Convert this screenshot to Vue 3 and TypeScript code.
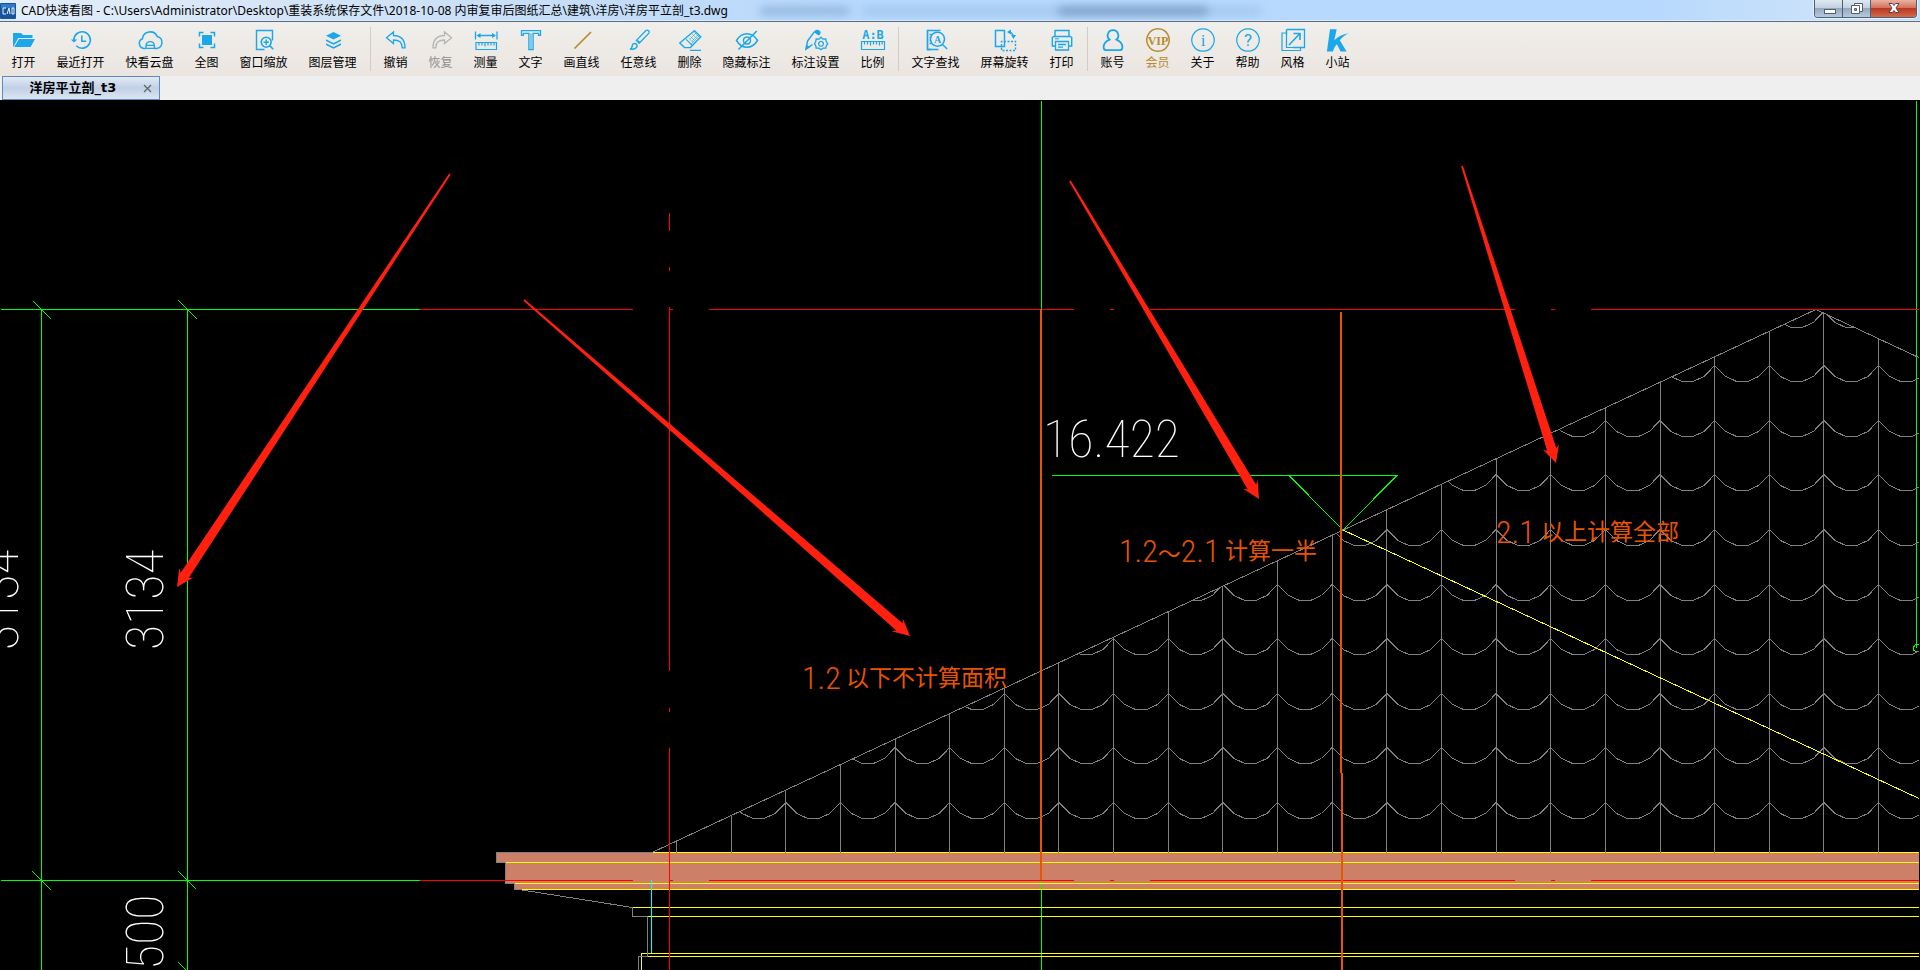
<script setup lang="ts">
interface Shape { d: string; fill?: boolean; w?: number; dash?: string }
interface Glyph { t: string; x: number; y: number; size: number; cls: string }
interface Tool { label: string; tone?: 'gold' | 'off'; shapes: Shape[]; glyphs?: Glyph[] }

const ring = 'M12 0.8a11.2 11.2 0 1 0 0.01 0z'

const groups: Tool[][] = [
  [
    { label: '打开', shapes: [
      { d: 'M1 5h8l2 2h9.5v3H6.2L1.6 18.5H1z', fill: true },
      { d: 'M7 11h16l-4.4 8H2.2z', fill: true },
    ] },
    { label: '最近打开', shapes: [
      { d: 'M4.9 12a8.2 8.2 0 1 1 2.4 5.8', w: 1.6 },
      { d: 'M1.8 11.4h6.4L5 14.6z', fill: true },
      { d: 'M12.8 7.6v5.6h4.4', w: 1.5 },
    ] },
    { label: '快看云盘', shapes: [
      { d: 'M7.5 20.4H6a5 5 0 0 1-1.6-9.6A7.8 7.8 0 0 1 19.3 8.6a6 6 0 0 1-.7 11.8h-2', w: 1.5 },
      { d: 'M8 20.4v-2.6a4.2 4.2 0 0 1 8.4 0v2.6zM8 17.4h8.4', w: 1.4 },
    ] },
    { label: '全图', shapes: [
      { d: 'M7 7h10v10H7z', fill: true },
      { d: 'M4.5 8.5V4.5h4M15.5 4.5h4v4M19.5 15.5v4h-4M8.5 19.5h-4v-4', w: 1.5 },
    ] },
    { label: '窗口缩放', shapes: [
      { d: 'M12.5 21.5H4.5v-19h16v10', w: 1.4 },
      { d: 'M14.2 9.2a5 5 0 1 0 .01 0zM17.8 17.6l3.4 3.6', w: 1.6 },
      { d: 'M11.5 14.2h5.4M14.2 11.5v5.4', w: 1.4 },
    ] },
    { label: '图层管理', shapes: [
      { d: 'M12.5 4l7.5 3.8-7.5 3.8L5 7.8z', fill: true },
      { d: 'M5 11.2l7.5 3.7 7.5-3.7v1.9l-7.5 3.7L5 13.1zM5 15.3l7.5 3.7 7.5-3.7v1.7l-7.5 3.7L5 17z', fill: true },
    ] },
  ],
  [
    { label: '撤销', shapes: [
      { d: 'M2.5 9.8L9.5 4v3.5C16 7.6 21 10 21 19.8h-2.8c0-5.6-3-7.8-8.7-7.8v3.6z', w: 1.3 },
    ] },
    { label: '恢复', tone: 'off', shapes: [
      { d: 'M22.5 9.8L15.5 4v3.5C9 7.6 4 10 4 19.8h2.8c0-5.6 3-7.8 8.7-7.8v3.6z', w: 1.3 },
    ] },
    { label: '测量', shapes: [
      { d: 'M1.5 3.5v8M23 3.5v8M4 7.5h16.5', w: 1.3 },
      { d: 'M2.5 7.5L6.5 5v5zM22 7.5L18 5v5z', fill: true },
      { d: 'M2 14.5h20.5v7H2zM5 15v2.5M8 15v2.5M11 15v3.5M14 15v2.5M17 15v2.5M20 15v2.5', w: 1.2 },
    ] },
    { label: '文字', shapes: [
      { d: 'M2.5 2.7h19v4.6h-1.9V5.4h-5.5v16.2h-4.2V5.4H4.4v1.9H2.5z', w: 1.3 },
      { d: 'M12 5.4v16', w: 1 },
    ] },
    { label: '画直线', tone: 'gold', shapes: [{ d: 'M4.5 20.5L21 4', w: 1.7 }] },
    { label: '任意线', shapes: [
      { d: 'M9.4 12.4L19 2.6c1.8-1.4 4.2.8 2.9 2.6L12.4 15z', w: 1.3 },
      { d: 'M3 21c2.3-.5 2-1.8 2.3-3.6.4-2.4 4-2.3 4.7-.3.7 2.6-2.3 4.6-7 3.9z', w: 1.5 },
      { d: 'M10.4 12.8l2.1 2', w: 2 },
    ] },
    { label: '删除', shapes: [
      { d: 'M16.5 2.8l6.3 6L12.4 19.6H6.6L1.8 15z', w: 1.4 },
      { d: 'M8.2 11.4l6 6M12 22.3h11', w: 1.2 },
      { d: 'M16.5 4.5l4.6 4.4M14.5 6.5l4.6 4.4M12.5 8.5l4.6 4.4M10.8 10.4l4.6 4.4M12 11l6-6M14 13l6-6M13 16l8-8', w: 0.6 },
    ] },
    { label: '隐藏标注', shapes: [
      { d: 'M1.5 12.5c5.5-9 15.5-9 21 0-5.5 9-15.5 9-21 0z', w: 1.5 },
      { d: 'M12 8.9a3.6 3.6 0 1 0 .01 0z', w: 1.5 },
      { d: 'M3.5 21.5L21.8 3', w: 1.5 },
    ] },
    { label: '标注设置', shapes: [
      { d: 'M10.5 3.6L3.5 13 2 21l6.5-4.5M10.5 3.6l4.5 3.2', w: 1.5 },
      { d: 'M1.3 22l1-5.5 4 2.7zM11 2.5c1.5-2 6-.3 5.7 2.7l-1.5 2-4.6-3.5z', fill: true },
      { d: 'M17 9.2l2 2 2.8-.2.5 2.8 1.5 1.9-1.5 1.9-.5 2.5-2.8.1-2 1.5-2-1.5-2.8-.1-.5-2.5-1.2-1.9 1.2-1.9.5-2.8 2.8.2z', w: 1.3 },
      { d: 'M17 13.4a2.4 2.4 0 1 0 .01 0z', w: 1.3 },
    ] },
    { label: '比例', shapes: [
      { d: 'M0.5 13.5h23v8h-23zM3.5 14v2.5M6.5 14v2.5M9.5 14v3.5M12.5 14v2.5M15.5 14v2.5M18.5 14v3.5M21.2 14v2.5', w: 1.2 },
    ], glyphs: [{ t: 'A:B', x: 12, y: 10.5, size: 12, cls: 'mono' }] },
  ],
  [
    { label: '文字查找', shapes: [
      { d: 'M7 21.5H3.5v-19h13', w: 1.5 },
      { d: 'M3.5 2.5v19h11M5.5 6.5h2.5M5.5 9.5h1.5M5.5 12.5h1.5M5.5 15.5h2.5', w: 1.3 },
      { d: 'M13.5 4.2a7 7 0 1 0 .01 0zM18.5 16.5l4.7 4.5', w: 1.4 },
    ], glyphs: [{ t: 'A', x: 13.5, y: 15, size: 10, cls: 'serif' }] },
    { label: '屏幕旋转', shapes: [
      { d: 'M2.5 2.5h9v16h-9z', w: 1.5 },
      { d: 'M8.5 21.5v-8h14v9h-14z', w: 1.4, dash: '2 1.5' },
      { d: 'M15 4c3 0 5 2 5.5 5', w: 1.4 },
      { d: 'M14 4l4-2.5v5zM20.5 11l-2.5-4h5z', fill: true },
    ] },
    { label: '打印', shapes: [
      { d: 'M5 8.5V2.5h14v6M5 18H2.3V9.5L4 8.5h16l1.7 1V18H19', w: 1.4 },
      { d: 'M5.5 13.5h13v8.5h-13zM8 16.5h8M8 19.2h5', w: 1.3 },
      { d: 'M5 10.8h4', w: 1 },
    ] },
  ],
  [
    { label: '账号', shapes: [
      { d: 'M12 2.2a5.3 5.3 0 0 1 3.4 9.4c3.4 1.4 6 4.6 6 7.8 0 2-1.2 2.7-3 2.7H5.6c-1.8 0-3-.7-3-2.7 0-3.2 2.6-6.4 6-7.8A5.3 5.3 0 0 1 12 2.2z', w: 1.8 },
    ] },
    { label: '会员', tone: 'gold', shapes: [{ d: ring, w: 1.5 }], glyphs: [{ t: 'VIP', x: 12, y: 16.5, size: 12, cls: 'serif' }] },
    { label: '关于', shapes: [{ d: ring, w: 1.2 }], glyphs: [{ t: 'i', x: 12, y: 17.5, size: 17, cls: 'serif thin' }] },
    { label: '帮助', shapes: [{ d: ring, w: 1.2 }], glyphs: [{ t: '?', x: 12, y: 18, size: 17, cls: 'sans' }] },
    { label: '风格', shapes: [
      { d: 'M6 1.5h17.5v18H12M5.5 7V1.5M18.5 1.5h5v18h-5', w: 1.3 },
      { d: 'M5.5 1.5v3.5H1v17.5h18.5v-3H5.5V4', w: 1.2 },
      { d: 'M8 17L18.5 6M12.5 5.5h6.5v6.5', w: 1.6 },
    ] },
    { label: '小站', shapes: [
      { d: 'M4 1.3h6.7L8.3 12.2C12 8.5 16.5 6 22.8 5.2c-3.6 1.5-6.6 4-9 7l6.8 11.2h-6l-3.7-7.2c-1.8 2-3.2 4.5-4 7.2H.9z', fill: true },
    ] },
  ],
]

const widthClass = (label: string) => `chars-${label.length}`

const fileName = '洋房平立剖_t3'
const title = 'CAD快速看图 - C:\\Users\\Administrator\\Desktop\\重装系统保存文件\\2018-10-08 内审复审后图纸汇总\\建筑\\洋房\\洋房平立剖_t3.dwg'

/* Roof tiles: one wavy row repeated on a regular pitch */
const pitch = 54.64
const columns = Array.from({ length: 23 }, (_, i) => Math.round(676 + i * pitch) + 0.5)
const tileRows = Array.from({ length: 10 }, (_, r) => {
  const y = Math.round(802 - r * 54.6)
  let d = ''
  for (let i = -1; i < 23; i++) {
    const x = 676.5 + i * pitch
    const pts = [[0, 0], [11, 11], [22, 16], [33, 16], [44, 11], [pitch, 0]]
    d += pts.map(([px, py], k) => `${k ? 'L' : 'M'}${(x + px).toFixed(1)} ${y + py + 0.5}`).join('')
  }
  return d
})
const roofTop = (x: number) => (x <= 1816 ? 852 - (x - 653) * 0.4665 : 309.5 + (x - 1816) * 0.467)

const lines = (y: number, segs: number[][]) => segs.map(([a, b]) => `M${a} ${y}.5H${b}`).join('')
const axisSegs = [[420, 633], [669, 673], [709, 1074], [1110, 1114], [1150, 1515], [1551, 1555], [1591, 1919]]
const redAxes = lines(309, axisSegs) + lines(880, axisSegs) + 'M669.5 213V231M669.5 267V271M669.5 307V671M669.5 708V712M669.5 748V970'

/* Tapered arrow from a thin tail to a pointed head */
function arrow(x1: number, y1: number, x2: number, y2: number): string {
  const len = Math.hypot(x1 - x2, y1 - y2)
  const ux = (x1 - x2) / len
  const uy = (y1 - y2) / len
  const at = (along: number, side: number) =>
    `${(x2 + ux * along - uy * side).toFixed(1)},${(y2 + uy * along + ux * side).toFixed(1)}`
  return [at(0, 0), at(17, 8.5), at(14, 4.8), at(len, 0.9), at(len, -0.9), at(14, -4.8), at(17, -8.5)].join(' ')
}
const arrows = [
  arrow(450, 174, 177, 587),
  arrow(524, 300, 910, 636),
  arrow(1070, 181, 1259, 499),
  arrow(1462, 166, 1556, 463),
]
</script>

<template>
  <div class="app">
    <header class="titlebar">
      <span class="ghost" aria-hidden="true"><i class="g1"></i><i class="g2"></i><i class="g3"></i></span>
      <svg class="logo" viewBox="0 0 16 16" aria-hidden="true">
        <rect width="16" height="16" rx="1" fill="#17549c" />
        <path d="M1 1h14v4H1z" fill="#2f7cc6" />
        <path d="M6 5H3v6h3M7 11l2-6 1 6M12 5h2v6h-2z" fill="none" stroke="#e8f4ff" stroke-width="1" />
      </svg>
      <h1>{{ title }}</h1>
      <div class="window-buttons">
        <button type="button" aria-label="最小化">
          <svg viewBox="0 0 28 20"><rect x="9.5" y="9.5" width="11" height="4" fill="#fff" stroke="#53616f" /></svg>
        </button>
        <button type="button" aria-label="还原">
          <svg viewBox="0 0 28 20"><path d="M11.5 3.5h8v8h-8z" fill="#fff" stroke="#53616f" /><path d="M8.5 5.500h8v8h-8z" fill="#fff" stroke="#53616f" /><path d="M11.500 8.500h2v2h-2z" fill="#aac" stroke="#53616f" /></svg>
        </button>
        <button type="button" class="close" aria-label="关闭">
          <svg viewBox="0 0 28 20"><path d="M9 3.500h3.500L14 5.500l1.500-2H19L16 8l3 4.500h-3.500l-1.500-2-1.500 2H9L12 8z" fill="#fff" stroke="#5d4250" stroke-width="1" /></svg>
        </button>
      </div>
    </header>

    <nav class="toolbar">
      <template v-for="(group, gi) in groups" :key="gi">
        <span v-if="gi > 0" class="sep"></span>
        <button
          v-for="tool in group"
          :key="tool.label"
          type="button"
          class="tool"
          :class="[widthClass(tool.label), tool.tone, { vip: tool.label === '会员' }]"
          :disabled="tool.tone === 'off'"
        >
          <svg viewBox="0 0 24 24" aria-hidden="true">
            <path
              v-for="(s, i) in tool.shapes"
              :key="i"
              :d="s.d"
              :class="s.fill ? 'solid' : 'line'"
              :stroke-width="s.w"
              :stroke-dasharray="s.dash"
            />
            <text v-for="g in tool.glyphs" :key="g.t" :x="g.x" :y="g.y" :font-size="g.size" :class="g.cls" text-anchor="middle">{{ g.t }}</text>
          </svg>
          <span>{{ tool.label }}</span>
        </button>
      </template>
    </nav>

    <div class="tabs">
      <div class="tab">
        <button type="button" class="tab-name">{{ fileName }}</button>
        <button type="button" class="tab-close" aria-label="关闭标签">
          <svg viewBox="0 0 9 9"><path d="M1 1l7 7M8 1L1 8" /></svg>
        </button>
      </div>
    </div>

    <main class="drawing">
      <svg viewBox="0 100 1920 870" preserveAspectRatio="xMinYMin slice">
        <defs>
          <clipPath id="roof"><path d="M653 852L1816 309.5L1919 357.6V852z" /></clipPath>
        </defs>

        <g class="cad">
          <path d="M496 852H1919V889H514V883H505V862H496z" class="slab" />
          <path class="green" d="M1 309.5H420M1 880.5H420M41.5 309V970M187.5 309V970M33 301L51 319M178 300L197 319M32 871L51 890M178 871L196 889M178 962L187 971M1041.5 101V970M1916.5 101V648" />
          <path class="green" d="M1919 644.5H1915.5L1913.5 647V650L1915.5 651.5H1919" />
          <path class="yellow" d="M653 852.5H1919M506 862.5H1919M515 883.5H1919M519 889.5H1919M633 907.5H1919M648 916.5H1919M641.5 970V953.5H1919M648 956.5H1919" />
          <path class="cyan" d="M651.5 880V953" />
          <path class="grey" d="M653 852.5H496.5V862.5H505.5V883.5H514.5V889.5H519L632.5 907.5V916.5H647.5V956.5H638.5V970" />
          <path class="grey" d="M653 852L1816 309.5L1919 357.6" />
          <path v-for="x in columns" :key="x" class="grey" :d="`M${x} ${roofTop(x).toFixed(0)}V853`" />
          <g clip-path="url(#roof)">
            <path v-for="(d, i) in tileRows" :key="i" class="grey" :d="d" />
          </g>
          <path class="yellow" d="M1343 530L1919 798.5" />
          <path class="red" :d="redAxes" />
          <path class="green" d="M1052 475.5H1397L1343 530L1289 475.5" />
          <path class="orange" d="M1041 309V880M1341 312V773M1342 773V970" />
        </g>

        <g class="dims">
          <text x="1043" y="457">16.422</text>
          <text transform="translate(163 650) rotate(-90)">3134</text>
          <text transform="translate(18 650) rotate(-90)">3134</text>
          <text transform="translate(163 970) rotate(-90)">500</text>
        </g>

        <g class="notes">
          <text x="802" y="689">1.2</text><text x="846" y="686" class="han">以下不计算面积</text>
          <text x="1119" y="562">1.2<tspan class="han">～</tspan>2.1</text><text x="1225" y="559" class="han">计算一半</text>
          <text x="1496" y="543">2.1</text><text x="1541" y="540" class="han">以上计算全部</text>
        </g>

        <polygon v-for="(p, i) in arrows" :key="i" :points="p" class="arrow" />
      </svg>
    </main>
  </div>
</template>

<style>
html,
body {
  background: #000;
}
</style>

<style scoped>
.app {
  display: flex;
  flex-direction: column;
  min-height: 100vh;
  background: #000;
  font-family: "Noto Sans", "Noto Sans CJK SC", sans-serif;
  font-size: 12px;
  color: #000;
}
button {
  margin: 0;
  padding: 0;
  border: 0;
  background: none;
  font: inherit;
  color: inherit;
}
.titlebar {
  position: relative;
  display: flex;
  align-items: flex-start;
  height: 22px;
  box-sizing: border-box;
  border-bottom: 1px solid #5b6c85;
  box-shadow: inset 0 -1px 0 #dcebfb;
  background: linear-gradient(90deg, #e4eefa 0%, #d5e5f7 14%, #c3dcf8 32%, #b7d9fd 45%, #b7d9fd 86%, #c9e1fa 94%, #c4def9 100%);
  overflow: hidden;
}
.logo {
  width: 16px;
  height: 16px;
  margin-top: 3px;
}
h1 {
  position: relative;
  margin: 0 0 0 5px;
  font-size: 12px;
  line-height: 22px;
  font-weight: 400;
  white-space: nowrap;
}
.ghost {
  position: absolute;
  inset: 0;
}
.ghost i {
  position: absolute;
  top: 7px;
  height: 8px;
  border-radius: 4px;
  filter: blur(4px);
}
.g1 {
  left: 760px;
  width: 90px;
  background: #8fb4dc;
}
.g2 {
  left: 862px;
  width: 400px;
  background: #a2c6ee;
}
.g3 {
  left: 1058px;
  width: 150px;
  background: #7c9fca;
}
.window-buttons {
  display: flex;
  margin-left: auto;
  margin-right: 3px;
  height: 18px;
  box-sizing: border-box;
  border: 1px solid #4f5f73;
  border-top: 0;
  border-radius: 0 0 4px 4px;
  overflow: hidden;
  box-shadow: 0 0 0 1px #e6f1fc;
}
.window-buttons button {
  width: 28px;
  background: linear-gradient(#dfe9f3 0, #c3d1e0 45%, #94a8bf 50%, #b7c9dc 100%);
  border-right: 1px solid #4f5f73;
}
.window-buttons .close {
  width: 45px;
  border-right: 0;
  background: linear-gradient(#e9b3a4 0, #d5725c 45%, #b83a22 50%, #d4694b 100%);
}
.window-buttons svg {
  display: block;
  width: 28px;
  height: 20px;
  margin: 0 auto;
}
.toolbar {
  display: flex;
  height: 54px;
  padding-left: 1px;
  background: linear-gradient(#f0efeb, #ebe5e1);
  overflow: hidden;
}
.tool {
  display: flex;
  flex: none;
  flex-direction: column;
  align-items: center;
  padding-top: 6px;
}
.chars-2 {
  width: 45px;
}
.chars-3 {
  width: 57px;
}
.chars-4 {
  width: 69px;
}
.tool svg {
  width: 24px;
  height: 24px;
  overflow: visible;
  color: #1aa7ec;
}
.tool span {
  margin-top: 3px;
  line-height: 16px;
  white-space: nowrap;
}
.tool.gold svg,
.vip {
  color: #b98a2c;
}
.tool.off {
  color: #8f8f8f;
}
.tool.off svg {
  color: #b5b5b5;
}
.solid,
.tool text {
  fill: currentColor;
}
.line {
  fill: none;
  stroke: currentColor;
}
.mono {
  font-family: "DejaVu Sans Mono", monospace;
  font-weight: 700;
}
.serif {
  font-family: "Liberation Serif", serif;
  font-weight: 700;
}
.serif.thin {
  font-weight: 400;
}
.sans {
  font-family: Roboto, sans-serif;
}
.sep {
  flex: none;
  width: 1px;
  height: 44px;
  margin: 5px 2px 0 3px;
  background: #cfcdca;
}
.tabs {
  height: 24px;
  padding-left: 2px;
  background: #efefef;
}
.tab {
  display: flex;
  align-items: center;
  width: 158px;
  height: 24px;
  box-sizing: border-box;
  border: 1px solid #5f8ac0;
  background: linear-gradient(#e3eaf4, #c0d0e6 50%, #dce6f2);
}
.tab-name {
  flex: 1;
  padding-left: 8px;
  font-family: "DejaVu Sans", "Noto Sans CJK SC", sans-serif;
  font-weight: 700;
  font-size: 13px;
  line-height: 20px;
}
.tab-close {
  width: 24px;
  height: 20px;
}
.tab-close svg {
  display: block;
  width: 9px;
  height: 9px;
  margin: 0 auto;
}
.tab-close path {
  stroke: #666;
  stroke-width: 1.3;
}
.drawing {
  flex: 1;
  display: flex;
  background: #000;
}
.drawing svg {
  display: block;
  width: 100%;
}
.cad {
  fill: none;
  shape-rendering: crispEdges;
}
.slab {
  fill: #cd7f67;
}
.green {
  stroke: #0f0;
}
.red {
  stroke: #f00;
}
.yellow {
  stroke: #ff0;
}
.grey {
  stroke: #808080;
}
.cyan {
  stroke: #0ff;
}
.orange {
  stroke: #e85400;
  stroke-width: 2;
}
.dims text {
  fill: #fff;
  font-family: "Roboto Condensed", Roboto, sans-serif;
  font-weight: 100;
  font-size: 52px;
}
.notes text {
  fill: #e85400;
  font-family: "Roboto Condensed", "Noto Sans CJK SC", sans-serif;
  font-weight: 300;
  font-size: 32px;
}
.notes .han {
  font-family: "Noto Sans CJK SC", sans-serif;
  font-weight: 400;
  font-size: 23px;
}
.arrow {
  fill: #ff2010;
}
</style>
